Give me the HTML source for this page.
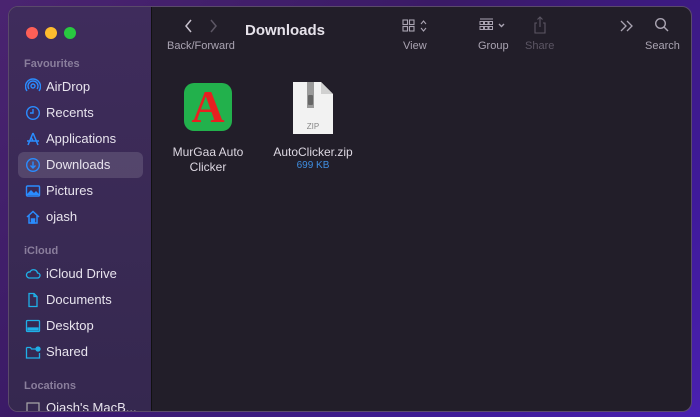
<!DOCTYPE html>
<html><head><style>
*{margin:0;padding:0;box-sizing:border-box}
body{width:700px;height:417px;overflow:hidden;background:linear-gradient(135deg,#4a2470 0%,#3a1a66 40%,#3f1a9a 80%,#4a20b0 100%);font-family:"Liberation Sans",sans-serif;position:relative}
.win{position:absolute;left:8px;top:6px;width:684px;height:406px;border-radius:10px;overflow:hidden;border:1px solid #5a4a6a;background:#221e29}
.side{position:absolute;left:0;top:0;width:143px;height:100%;background:linear-gradient(180deg,#3f2c5c 0%,#3a2a55 50%,#35284f 100%);border-right:1px solid #111}
.dot{position:absolute;top:20px;width:12px;height:12px;border-radius:50%}
.sec{position:absolute;left:15px;font-size:11px;color:#8a7e9c;font-weight:bold}
.it{position:absolute;left:37px;font-size:13px;color:#e8e4ee}
.ic{position:absolute;left:16px;width:16px;height:16px}
.sel{position:absolute;left:9px;top:145px;width:125px;height:26px;background:rgba(255,255,255,.13);border-radius:6px}
.lbl{position:absolute;font-size:11px;color:#aaa4b2;top:33px}
.t{position:absolute;color:#bbb5c2}
</style></head><body>
<div class="win">
<div class="side">
<div class="dot" style="left:17px;background:#fe5f57"></div>
<div class="dot" style="left:36px;background:#febc2e"></div>
<div class="dot" style="left:55px;background:#28c840"></div>
<div class="sec" style="top:51px">Favourites</div>
<div class="sel"></div>
<svg class="ic" style="top:71px" viewBox="0 0 16 16" fill="none" stroke="#2a8cff" stroke-width="1.4"><circle cx="8" cy="8" r="2"/><path d="M4 11a5 5 0 1 1 8 0M2 13a7.5 7.5 0 1 1 12 0"/></svg>
<div class="it" style="top:72px">AirDrop</div>
<svg class="ic" style="top:98px" viewBox="0 0 16 16" fill="none" stroke="#2a8cff" stroke-width="1.4"><circle cx="8" cy="8" r="6.3"/><path d="M8 4v4H5"/></svg>
<div class="it" style="top:98px">Recents</div>
<svg class="ic" style="top:124px" viewBox="0 0 16 16" fill="none" stroke="#2a8cff" stroke-width="1.5"><path d="M8 2L3 14M8 2l5 12M2 10h12M6 6l2 4"/></svg>
<div class="it" style="top:124px">Applications</div>
<svg class="ic" style="top:150px" viewBox="0 0 16 16" fill="none" stroke="#2a8cff" stroke-width="1.4"><circle cx="8" cy="8" r="6.3"/><path d="M8 4.5v6M5.5 8.5L8 11l2.5-2.5"/></svg>
<div class="it" style="top:150px">Downloads</div>
<svg class="ic" style="top:176px" viewBox="0 0 16 16" fill="none" stroke="#2a8cff" stroke-width="1.4"><rect x="1.5" y="3" width="13" height="10" rx="1"/><path d="M2 12l4-4 3 3 2-2 3 3" fill="#2a8cff"/></svg>
<div class="it" style="top:176px">Pictures</div>
<svg class="ic" style="top:202px" viewBox="0 0 16 16" fill="none" stroke="#2a8cff" stroke-width="1.5"><path d="M2 8l6-5.5L14 8M4 6.5V14h8V6.5"/><rect x="6.5" y="10" width="3" height="4" fill="#2a8cff"/></svg>
<div class="it" style="top:202px">ojash</div>
<div class="sec" style="top:238px">iCloud</div>
<svg class="ic" style="top:258px" viewBox="0 0 16 16" fill="none" stroke="#1fb0e8" stroke-width="1.3"><path d="M4 13h8.5a2.5 2.5 0 0 0 0-5 4 4 0 0 0-7.5-1A3 3 0 0 0 4 13z"/></svg>
<div class="it" style="top:259px">iCloud Drive</div>
<svg class="ic" style="top:285px" viewBox="0 0 16 16" fill="none" stroke="#1fb0e8" stroke-width="1.3"><path d="M4 1.5h5l3 3v10H4z M9 1.5v3h3"/></svg>
<div class="it" style="top:285px">Documents</div>
<svg class="ic" style="top:311px" viewBox="0 0 16 16" fill="none" stroke="#1fb0e8" stroke-width="1.3"><rect x="1.5" y="2.5" width="13" height="11" rx="1"/><rect x="3" y="10" width="10" height="2" fill="#1fb0e8"/></svg>
<div class="it" style="top:311px">Desktop</div>
<svg class="ic" style="top:337px" viewBox="0 0 16 16" fill="none" stroke="#1fb0e8" stroke-width="1.3"><path d="M1.5 3.5h4l1 1.5h4M1.5 3.5V14h13V9"/><circle cx="13" cy="5" r="2" fill="#1fb0e8"/></svg>
<div class="it" style="top:337px">Shared</div>
<div class="sec" style="top:373px">Locations</div>
<svg class="ic" style="top:393px" viewBox="0 0 16 16" fill="none" stroke="#aaa" stroke-width="1.2"><rect x="2" y="3" width="12" height="9"/></svg>
<div class="it" style="top:393px">Ojash's MacB...</div>
</div>
<svg style="position:absolute;left:175px;top:12px" width="40" height="14" viewBox="0 0 40 14" fill="none" stroke-width="1.5"><path d="M7 1L2 7l5 6" stroke="#c8c2ce"/><path d="M27 1l5 6-5 6" stroke="#5c5664"/></svg>
<div class="lbl" style="left:158px">Back/Forward</div>
<div style="position:absolute;left:236px;top:15px;font-size:15px;font-weight:bold;color:#e6e2ea">Downloads</div>
<svg style="position:absolute;left:393px;top:12px" width="30" height="14" viewBox="0 0 30 14" fill="none" stroke="#aaa4b2" stroke-width="1.1"><rect x="1" y="1" width="4.5" height="4.5"/><rect x="7.5" y="1" width="4.5" height="4.5"/><rect x="1" y="7.5" width="4.5" height="4.5"/><rect x="7.5" y="7.5" width="4.5" height="4.5"/><path d="M19 5l2.5-3 2.5 3M19 9l2.5 3 2.5-3"/></svg>
<div class="lbl" style="left:394px">View</div>
<svg style="position:absolute;left:470px;top:11px" width="32" height="16" viewBox="0 0 32 16" fill="none" stroke="#aaa4b2" stroke-width="1"><path d="M1 1h13"/><rect x="1" y="3.5" width="3.5" height="3"/><rect x="5.5" y="3.5" width="3.5" height="3"/><rect x="10" y="3.5" width="3.5" height="3"/><rect x="1" y="8.5" width="3.5" height="3"/><rect x="5.5" y="8.5" width="3.5" height="3"/><rect x="10" y="8.5" width="3.5" height="3"/><path d="M20 6l2.5 2.5L25 6" stroke-width="1.4"/></svg>
<div class="lbl" style="left:469px">Group</div>
<svg style="position:absolute;left:524px;top:9px" width="14" height="18" viewBox="0 0 14 18" fill="none" stroke="#5c5664" stroke-width="1.1"><path d="M4 7H2v10h10V7h-2M7 11V1M4.5 3.5L7 1l2.5 2.5"/></svg>
<div class="lbl" style="left:516px;color:#5c5664">Share</div>
<svg style="position:absolute;left:610px;top:13px" width="16" height="12" viewBox="0 0 16 12" fill="none" stroke="#aaa4b2" stroke-width="1.3"><path d="M2 1l5 5-5 5M8 1l5 5-5 5"/></svg>
<svg style="position:absolute;left:645px;top:10px" width="16" height="16" viewBox="0 0 16 16" fill="none" stroke="#aaa4b2" stroke-width="1.4"><circle cx="6.5" cy="6.5" r="4.8"/><path d="M10 10l4 4"/></svg>
<div class="lbl" style="left:636px">Search</div>
<div style="position:absolute;left:175px;top:76px;width:48px;height:48px;border-radius:10px;background:#22b14c"></div>
<div style="position:absolute;left:175px;top:74px;width:48px;text-align:center;font-family:'Liberation Serif',serif;font-weight:bold;font-size:46px;color:#e82020;line-height:52px">A</div>
<div class="t" style="left:158px;top:138px;width:82px;text-align:center;font-size:12px;line-height:15px;color:#ddd8e2">MurGaa Auto Clicker</div>
<svg style="position:absolute;left:283px;top:74px" width="42" height="54" viewBox="0 0 42 54"><path d="M1 1h28l12 12v40H1z" fill="#f2f2f2"/><path d="M29 1v12h12" fill="#d0d0d0"/><rect x="15" y="1" width="7" height="26" fill="#9a9a9a"/><rect x="16" y="14" width="5" height="10" rx="1" fill="#666"/><text x="21" y="48" font-size="8" fill="#888" text-anchor="middle" font-family="Liberation Sans">ZIP</text></svg>
<div style="position:absolute;left:258px;top:138px;width:92px;text-align:center;font-size:12px;color:#ddd8e2">AutoClicker.zip</div>
<div style="position:absolute;left:258px;top:153px;width:92px;text-align:center;font-size:10px;color:#3f8ee0">699 KB</div>
</div>
</body></html>
